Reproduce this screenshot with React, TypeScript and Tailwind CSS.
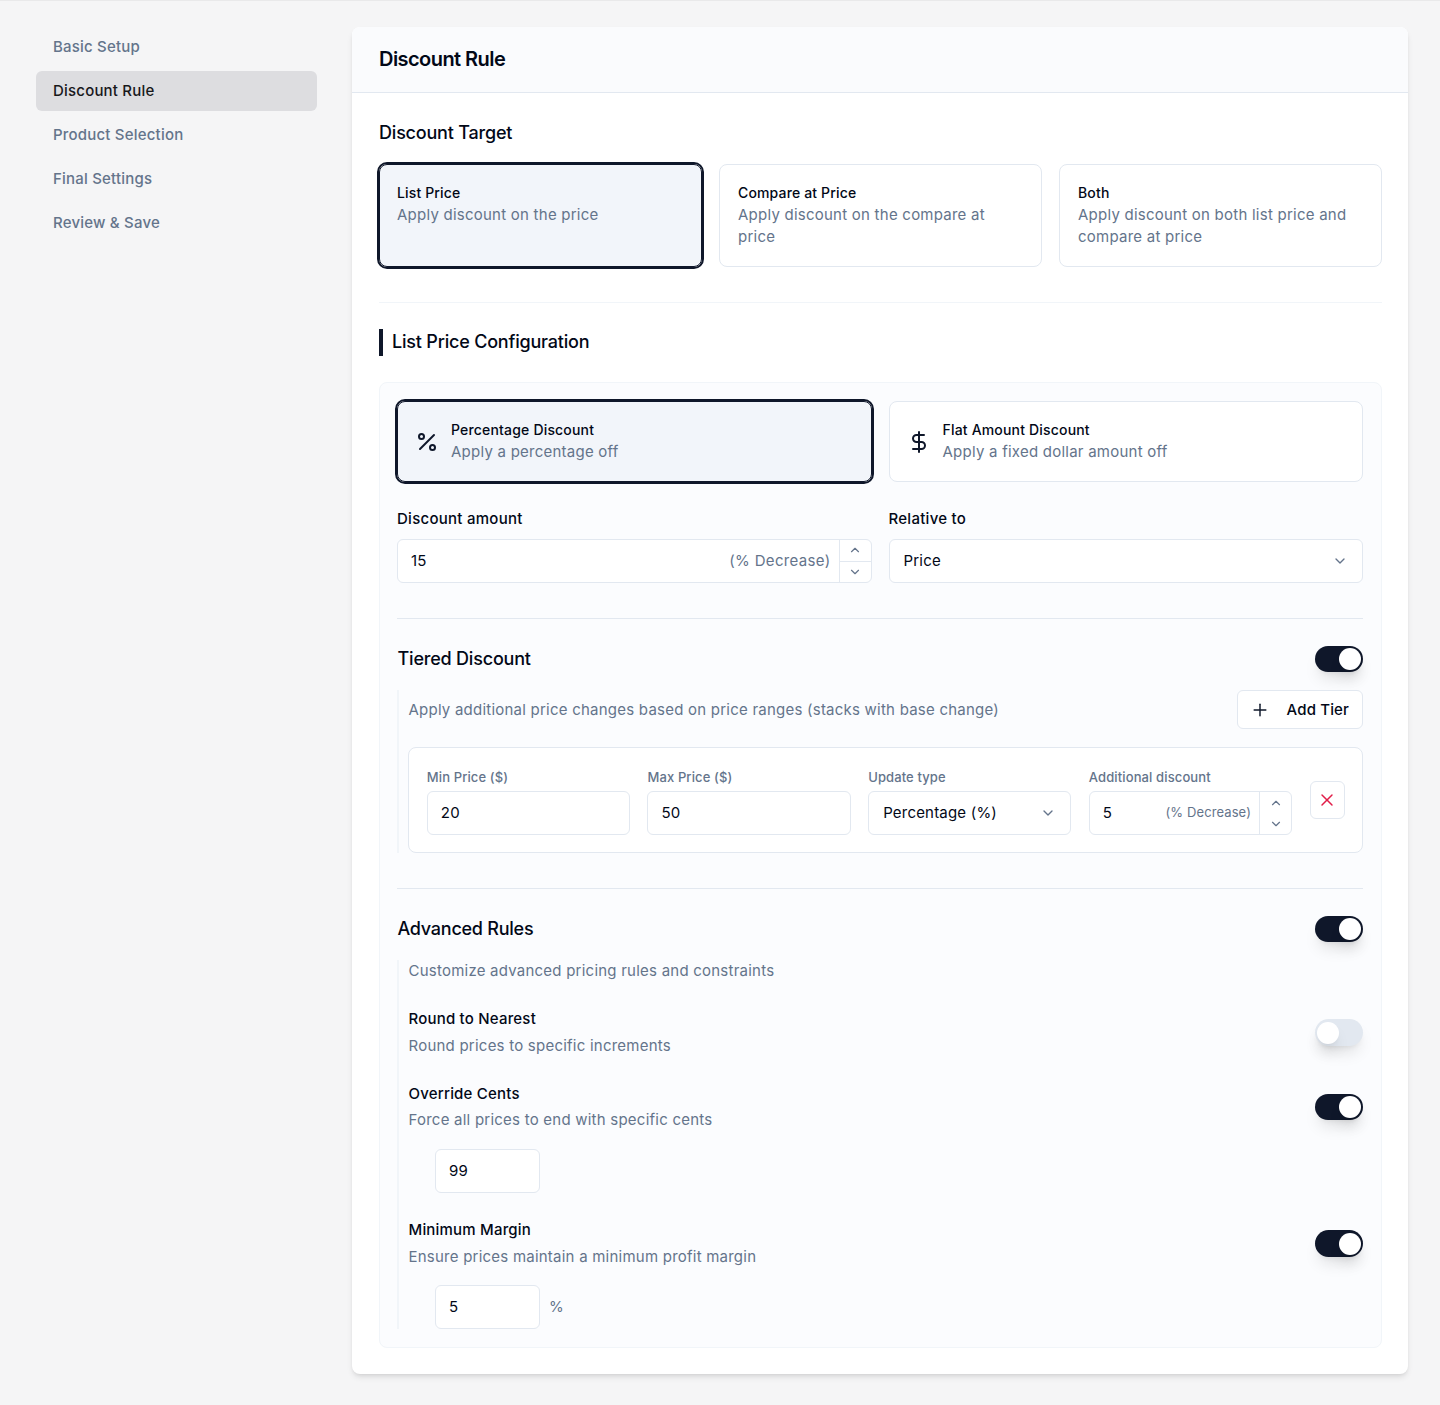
import React from "react";
import { ChevronDown, ChevronUp, DollarSign, Percent, Plus, X } from "lucide-react";

const navItems = ["Basic Setup", "Discount Rule", "Product Selection", "Final Settings", "Review & Save"];

const targets = [
  { title: "List Price", text: "Apply discount on the price", active: true },
  { title: "Compare at Price", text: "Apply discount on the compare at price", active: false },
  { title: "Both", text: "Apply discount on both list price and compare at price", active: false },
];

function Toggle({ on = true, className = "h-[26px]" }: { on?: boolean; className?: string }) {
  return (
    <div
      className={`flex w-12 shrink-0 items-center rounded-full border-2 border-transparent shadow-lg ${className} ${
        on ? "justify-end bg-[#0f172a]" : "justify-start bg-[#e2e8f0]"
      }`}
    >
      <div className="h-[22px] w-[22px] rounded-full bg-white shadow-lg" />
    </div>
  );
}

function TextBox({ value, className = "" }: { value: string; className?: string }) {
  return (
    <div className={`flex h-11 items-center rounded-md border border-[#e2e8f0] bg-white px-[13px] text-[15px] tracking-[0.2px] text-[#020817] ${className}`}>
      {value}
    </div>
  );
}

function NumberBox({ value, suffix, small }: { value: string; suffix: string; small?: boolean }) {
  return (
    <div className="flex h-11 items-stretch rounded-md border border-[#e2e8f0] bg-white text-[15px] tracking-[0.2px] text-[#020817]">
      <div className="flex flex-1 items-center justify-between pl-[13px] pr-[8px]">
        <span>{value}</span>
        <span className={`text-[#64748b] ${small ? "text-[13px] tracking-[0.1px]" : "text-[15px] tracking-[0.33px]"}`}>{suffix}</span>
      </div>
      <div className={`flex w-8 flex-col border-l border-[#e2e8f0] ${small ? "" : "divide-y divide-[#e2e8f0]"}`}>
        <div className="flex flex-1 items-center justify-center">
          <ChevronUp size={14} className="text-[#64748b]" />
        </div>
        <div className="flex flex-1 items-center justify-center">
          <ChevronDown size={14} className="text-[#64748b]" />
        </div>
      </div>
    </div>
  );
}

function SelectBox({ value }: { value: string }) {
  return (
    <div className="flex h-11 items-center justify-between rounded-md border border-[#e2e8f0] bg-white px-[14px] text-[15px] tracking-[0.2px] text-[#020817]">
      <span>{value}</span>
      <ChevronDown size={16} className="text-[#64748b]" />
    </div>
  );
}

function TierField({ label, children }: { label: string; children: React.ReactNode }) {
  return (
    <div>
      <div className="mb-[5px] h-[17px] text-[13px] leading-[17px] font-medium tracking-[0.12px] text-[#64748b]">{label}</div>
      {children}
    </div>
  );
}

function ModeCard({
  icon,
  title,
  text,
  active,
}: {
  icon: React.ReactNode;
  title: string;
  text: string;
  active?: boolean;
}) {
  return (
    <div
      className={`flex h-[81px] items-center gap-3 rounded-lg border pl-[17px] ${
        active ? "border-[#0f172a] bg-[#f2f5fa] outline-2 outline-[#0f172a]" : "border-[#e2e8f0] bg-white"
      }`}
    >
      {icon}
      <div>
        <div className="text-sm leading-5 font-medium tracking-[0.18px] text-[#020817]">{title}</div>
        <div className="mt-[1px] text-[15px] leading-[22px] tracking-[0.24px] text-[#64748b]">{text}</div>
      </div>
    </div>
  );
}

function RuleRow({
  title,
  text,
  on = true,
  gap = "mt-[6px]",
  toggleClass = "h-[27px] mb-px",
}: {
  title: string;
  text: string;
  on?: boolean;
  gap?: string;
  toggleClass?: string;
}) {
  return (
    <div className="mt-[27px] flex items-center justify-between">
      <div>
        <div className="text-[15px] leading-5 font-medium tracking-[0.2px] text-[#020817]">{title}</div>
        <div className={`${gap} text-[15px] leading-[22px] tracking-[0.23px] text-[#64748b]`}>{text}</div>
      </div>
      <Toggle on={on} className={toggleClass} />
    </div>
  );
}

export default function App() {
  return (
    <div className="min-h-[1405px] border-t border-[#e9e9ea] bg-[#f5f5f6] font-['Inter',sans-serif]">
      <div className="flex items-start gap-[35px] pt-[26px] pr-8 pl-9">
        <aside className="w-[281px] shrink-0">
          <nav className="flex flex-col gap-1">
            {navItems.map((item) => (
              <div
                key={item}
                className={`flex h-10 items-center rounded-md px-[17px] text-[15px] font-medium tracking-[0.2px] ${
                  item === "Discount Rule" ? "bg-[#dddde0] text-[#18181b]" : "text-[#64748b]"
                }`}
              >
                {item}
              </div>
            ))}
          </nav>
        </aside>

        <main className="w-[1056px] rounded-lg bg-white shadow-md">
          <div className="flex h-[66px] items-center rounded-t-lg border-b border-[#e2e8f0] bg-[#fafbfd] px-[27px] pb-[2px]">
            <h1 className="text-xl font-semibold tracking-[-0.55px] text-[#020817]">Discount Rule</h1>
          </div>

          <div className="pt-[27px] pr-[26px] pb-[26px] pl-[27px]">
            <h2 className="text-lg leading-[26px] font-medium tracking-[-0.2px] text-[#020817]">Discount Target</h2>

            <div className="mt-[18px] grid grid-cols-3 gap-[17px]">
              {targets.map((t) => (
                <div
                  key={t.title}
                  className={`h-[103px] rounded-lg border pt-[18px] pr-[18px] ${
                    t.active
                      ? "border-[#0f172a] bg-[#f2f5fa] pl-[17px] outline-2 outline-[#0f172a]"
                      : "border-[#e2e8f0] bg-white pl-[18px]"
                  }`}
                >
                  <div className="text-sm leading-5 font-medium tracking-[0.15px] text-[#020817]">{t.title}</div>
                  <div className="mt-[1px] text-[15px] leading-[22px] tracking-[0.24px] text-[#64748b]">{t.text}</div>
                </div>
              ))}
            </div>

            <div className="mt-[35px] border-t border-[#f1f5f9]" />

            <div className="mt-[26px] flex h-[27px] items-center border-l-4 border-[#0f172a] pb-[2px] pl-[9px]">
              <h2 className="text-lg font-medium tracking-[-0.2px] text-[#020817]">List Price Configuration</h2>
            </div>

            <div className="mt-[26px] rounded-lg border border-[#f1f5f9] bg-[#fbfcfe] pt-[18px] pr-[18px] pb-[18px] pl-[17px]">
              <div className="grid grid-cols-2 gap-[17px]">
                <ModeCard
                  active
                  icon={<Percent size={24} strokeWidth={2} className="text-[#0f172a]" />}
                  title="Percentage Discount"
                  text="Apply a percentage off"
                />
                <ModeCard
                  icon={<DollarSign size={24} strokeWidth={2} className="text-[#0f172a]" />}
                  title="Flat Amount Discount"
                  text="Apply a fixed dollar amount off"
                />
              </div>

              <div className="mt-[27px] grid grid-cols-2 gap-[17px]">
                <div>
                  <div className="mb-[10px] text-[15px] leading-5 font-medium tracking-[0.27px] text-[#020817]">Discount amount</div>
                  <NumberBox value="15" suffix="(% Decrease)" />
                </div>
                <div>
                  <div className="mb-[10px] text-[15px] leading-5 font-medium tracking-[0.27px] text-[#020817]">Relative to</div>
                  <SelectBox value="Price" />
                </div>
              </div>

              <div className="mt-[35px] border-t border-[#e2e8f0]" />

              <div className="mt-[27px] flex items-center justify-between">
                <h3 className="ml-[0.5px] text-lg leading-[26px] font-medium tracking-[-0.2px] text-[#020817]">Tiered Discount</h3>
                <Toggle />
              </div>

              <div className="mt-[18px] border-l-2 border-[#f1f5f9] pl-[9px]">
                <div className="flex h-[39px] items-center justify-between">
                  <p className="pt-px pl-[0.5px] text-[15px] tracking-[0.23px] text-[#64748b]">
                    Apply additional price changes based on price ranges (stacks with base change)
                  </p>
                  <div className="flex h-[39px] w-[126px] items-center justify-between rounded-md border border-[#e2e8f0] bg-white pr-[13px] pl-3 text-[15px] font-medium tracking-[0.15px] text-[#020817]">
                    <Plus size={20} strokeWidth={1.75} className="text-[#0f172a]" />
                    <span className="pt-px">Add Tier</span>
                  </div>
                </div>

                <div className="mt-[18px] flex items-center gap-[18px] rounded-lg border border-[#e2e8f0] bg-white pt-[21px] pr-[17px] pb-[17px] pl-[17.8px]">
                  <div className="grid flex-1 grid-cols-4 gap-[17.5px]">
                    <TierField label="Min Price ($)">
                      <TextBox value="20" />
                    </TierField>
                    <TierField label="Max Price ($)">
                      <TextBox value="50" />
                    </TierField>
                    <TierField label="Update type">
                      <SelectBox value="Percentage (%)" />
                    </TierField>
                    <TierField label="Additional discount">
                      <NumberBox value="5" suffix="(% Decrease)" small />
                    </TierField>
                  </div>
                  <div className="-mt-[4px] flex h-[38px] w-[35px] shrink-0 items-center justify-center rounded-md border border-[#e2e8f0] bg-white pr-px">
                    <X size={20} strokeWidth={1.75} className="text-[#e11d48]" />
                  </div>
                </div>
              </div>

              <div className="mt-[35px] border-t border-[#e2e8f0]" />

              <div className="mt-[27px] flex items-center justify-between">
                <h3 className="ml-[0.5px] text-lg leading-[26px] font-medium tracking-[-0.25px] text-[#020817]">Advanced Rules</h3>
                <Toggle />
              </div>

              <div className="mt-[18px] border-l-2 border-[#f1f5f9] pl-[9.5px]">
                <p className="h-[22px] text-[15px] leading-[22px] tracking-[0.23px] text-[#64748b]">
                  Customize advanced pricing rules and constraints
                </p>

                <RuleRow title="Round to Nearest" text="Round prices to specific increments" on={false} />

                <RuleRow
                  title="Override Cents"
                  text="Force all prices to end with specific cents"
                  gap="mt-[5px]"
                  toggleClass="h-[26px] mb-[2px]"
                />
                <div className="mt-[18px] ml-[26.5px] flex items-center">
                  <TextBox value="99" className="w-[105px]" />
                </div>

                <RuleRow title="Minimum Margin" text="Ensure prices maintain a minimum profit margin" />
                <div className="mt-[17px] ml-[26.5px] flex items-center gap-[9px]">
                  <TextBox value="5" className="w-[105px]" />
                  <span className="text-[15px] tracking-[0.24px] text-[#64748b]">%</span>
                </div>
              </div>
            </div>
          </div>
        </main>
      </div>
    </div>
  );
}
